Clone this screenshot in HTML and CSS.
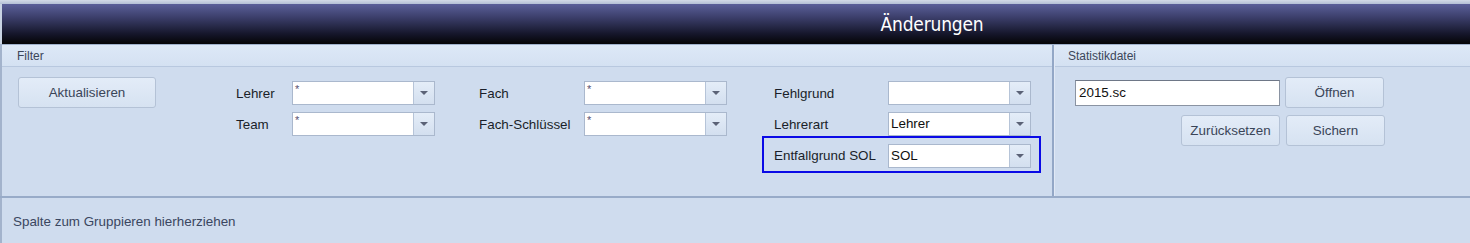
FILE: index.html
```html
<!DOCTYPE html>
<html lang="de">
<head>
<meta charset="utf-8">
<title>Änderungen</title>
<link rel="stylesheet" href="styles.css">
</head>
<body>
<div class="topstrip"></div>
<div class="titlebar"><span class="title">Änderungen</span></div>
<div class="panels">
  <section class="panel filter">
    <div class="panel-head">Filter</div>
    <div class="filter-body">
      <button class="btn btn-refresh">Aktualisieren</button>
      <div class="group g1">
        <div class="row"><span class="lbl l1">Lehrer</span><div class="combo"><span class="val star">*</span><span class="arrow"></span></div></div>
        <div class="row"><span class="lbl l1">Team</span><div class="combo"><span class="val star">*</span><span class="arrow"></span></div></div>
      </div>
      <div class="group g2">
        <div class="row"><span class="lbl l2">Fach</span><div class="combo"><span class="val star">*</span><span class="arrow"></span></div></div>
        <div class="row"><span class="lbl l2">Fach-Schlüssel</span><div class="combo"><span class="val star">*</span><span class="arrow"></span></div></div>
      </div>
      <div class="group g3">
        <div class="row"><span class="lbl l3">Fehlgrund</span><div class="combo"><span class="val"></span><span class="arrow"></span></div></div>
        <div class="row"><span class="lbl l3">Lehrerart</span><div class="combo"><span class="val">Lehrer</span><span class="arrow"></span></div></div>
        <div class="row focus"><span class="lbl l3">Entfallgrund SOL</span><div class="combo"><span class="val">SOL</span><span class="arrow"></span></div></div>
      </div>
    </div>
  </section>
  <section class="panel stat">
    <div class="panel-head">Statistikdatei</div>
    <div class="stat-body">
      <div class="textbox">2015.sc</div>
      <button class="btn">Öffnen</button>
      <button class="btn">Zurücksetzen</button>
      <button class="btn">Sichern</button>
    </div>
  </section>
</div>
<div class="groupbar">Spalte zum Gruppieren hierherziehen</div>
</body>
</html>
```

FILE: styles.css
```css
* { box-sizing: border-box; }
html, body { margin: 0; padding: 0; }
body {
  width: 1470px;
  height: 243px;
  overflow: hidden;
  background: #cfdcee;
  font-family: "Liberation Sans", Arial, sans-serif;
  font-size: 13.4px;
  color: #1f2530;
}
.topstrip {
  height: 4px;
  background: linear-gradient(#d3dbe8, #b3bfd6);
}
.titlebar {
  height: 40px;
  background: linear-gradient(#5a5f99 0%, #3a3d68 35%, #15162a 75%, #040406 100%);
  border-left: 2px solid #c9d3e3;
  display: flex;
  align-items: center;
  justify-content: center;
  padding-left: 392px;
}
.title {
  font-family: "DejaVu Sans Condensed", "DejaVu Sans", sans-serif;
  font-stretch: condensed;
  font-size: 19px;
  color: #ffffff;
  letter-spacing: -0.2px;
}
.panels {
  display: flex;
  height: 154px;
  border-top: 1px solid #9fb0cb;
  border-bottom: 2px solid #98abc8;
}
.panel {
  display: flex;
  flex-direction: column;
}
.filter {
  width: 1054px;
  border-left: 2px solid #a3b3cc;
  border-right: 2px solid #93a7c6;
}
.stat {
  flex: 1;
  border-left: 1px solid #e1e9f5;
}
.panel-head {
  height: 22px;
  background: linear-gradient(#dde8f7, #d4e1f2);
  border-bottom: 1px solid #b8c8df;
  padding: 4px 0 0 13px;
  font-size: 12px;
  color: #3b4659;
}
.filter .panel-head { padding-left: 15px; }
.filter-body {
  display: flex;
  align-items: flex-start;
  padding: 10px 0 0 16px;
}
.btn {
  font-family: "Liberation Sans", Arial, sans-serif;
  font-size: 13.4px;
  color: #3a4558;
  height: 31px;
  width: 99px;
  border: 1px solid #b4c2d6;
  border-radius: 3px;
  background: linear-gradient(#e3ecf8, #d6e2f1);
  padding: 0;
}
.btn-refresh { width: 138px; }
.group {
  display: flex;
  flex-direction: column;
  gap: 7px;
  margin-top: 4px;
}
.g1 { margin-left: 80px; }
.g2 { margin-left: 44px; }
.g3 { margin-left: 47px; }
.g3 { gap: 0; }
.g3 .row + .row { margin-top: 7px; }
.g3 .row.focus { margin-top: 0; }
.row {
  display: flex;
  align-items: center;
}
.lbl { color: #1a1f29; }
.l1 { width: 56px; }
.l2 { width: 105px; }
.l3 { width: 114px; }
.combo {
  width: 143px;
  height: 24px;
  display: flex;
  border: 1px solid #aab8cd;
  background: #ffffff;
}
.val {
  flex: 1;
  padding: 3px 0 0 2px;
  color: #101010;
}
.val.star {
  font-size: 11px;
  padding-top: 1px;
  color: #5a5070;
}
.arrow {
  width: 21px;
  border-left: 1px solid #b6c4d8;
  background: linear-gradient(#e4edf8, #d3dfef);
  display: flex;
  align-items: center;
  justify-content: center;
}
.arrow::before {
  content: "";
  width: 0;
  height: 0;
  border-left: 4px solid transparent;
  border-right: 4px solid transparent;
  border-top: 4px solid #5b6276;
}
.focus {
  margin-left: -12px;
  width: 279px;
  height: 37px;
  border: 2px solid #0a0ae6;
  padding: 6px 0 0 10px;
  align-items: flex-start;
}
.focus .lbl { padding-top: 4px; }
.stat-body {
  display: grid;
  grid-template-columns: 205px 99px;
  column-gap: 5px;
  row-gap: 7px;
  padding: 10px 0 0 20px;
}
.textbox {
  height: 26px;
  margin-top: 3px;
  border: 1px solid #8a93a2;
  border-top-color: #6e7787;
  background: #ffffff;
  padding: 4px 0 0 3px;
  color: #101010;
}
.stat-body .btn:nth-of-type(2) {
  justify-self: end;
}
.stat-body .btn:nth-of-type(3) {
  margin-left: 1px;
}
.groupbar {
  height: 45px;
  border-left: 2px solid #a3b3cc;
  padding: 16px 0 0 11px;
  font-size: 13.4px;
  color: #3a4660;
}
```
